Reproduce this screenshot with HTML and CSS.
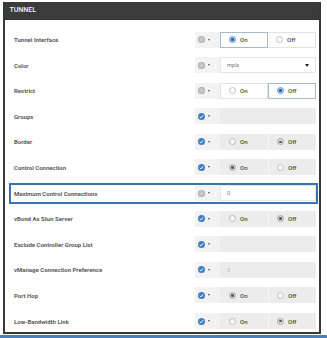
FILE: index.html
```html
<!DOCTYPE html>
<html>
<head>
<meta charset="utf-8">
<link rel="stylesheet" href="styles.css">
</head>
<body>
<div class="panel">
  <div class="header">TUNNEL</div>
  <div class="rows">
    <div class="row">
      <div class="label">Tunnel Interface</div>
      <div class="ctrl">
        <div class="scope"><span class="ico gray"></span><span class="caret"></span></div>
        <div class="opt sel-blue"><span class="radio on-blue"></span>On</div>
        <div class="opt"><span class="radio"></span>Off</div>
      </div>
    </div>
    <div class="row">
      <div class="label">Color</div>
      <div class="ctrl">
        <div class="scope"><span class="ico gray"></span><span class="caret"></span></div>
        <div class="select"><span class="val">mpls</span><span class="tri"></span></div>
      </div>
    </div>
    <div class="row">
      <div class="label">Restrict</div>
      <div class="ctrl">
        <div class="scope"><span class="ico gray"></span><span class="caret"></span></div>
        <div class="opt"><span class="radio"></span>On</div>
        <div class="opt sel-blue"><span class="radio on-blue"></span>Off</div>
      </div>
    </div>
    <div class="row">
      <div class="label">Groups</div>
      <div class="ctrl dis">
        <div class="scope"><span class="ico blue"><svg viewBox="0 0 8 8"><path d="M2 4.2 L3.4 5.5 L6 2.6" fill="none" stroke="#fff" stroke-width="1.1"/></svg></span><span class="caret"></span></div>
        <div class="input"></div>
      </div>
    </div>
    <div class="row">
      <div class="label">Border</div>
      <div class="ctrl dis">
        <div class="scope"><span class="ico blue"><svg viewBox="0 0 8 8"><path d="M2 4.2 L3.4 5.5 L6 2.6" fill="none" stroke="#fff" stroke-width="1.1"/></svg></span><span class="caret"></span></div>
        <div class="opt"><span class="radio"></span>On</div>
        <div class="opt"><span class="radio on-gray"></span>Off</div>
      </div>
    </div>
    <div class="row">
      <div class="label">Control Connection</div>
      <div class="ctrl dis">
        <div class="scope"><span class="ico blue"><svg viewBox="0 0 8 8"><path d="M2 4.2 L3.4 5.5 L6 2.6" fill="none" stroke="#fff" stroke-width="1.1"/></svg></span><span class="caret"></span></div>
        <div class="opt"><span class="radio on-gray"></span>On</div>
        <div class="opt"><span class="radio"></span>Off</div>
      </div>
    </div>
    <div class="row hl">
      <div class="label">Maximum Control Connections</div>
      <div class="ctrl">
        <div class="scope"><span class="ico gray"></span><span class="caret"></span></div>
        <div class="input"><span class="val">0</span></div>
      </div>
    </div>
    <div class="row">
      <div class="label">vBond As Stun Server</div>
      <div class="ctrl dis">
        <div class="scope"><span class="ico blue"><svg viewBox="0 0 8 8"><path d="M2 4.2 L3.4 5.5 L6 2.6" fill="none" stroke="#fff" stroke-width="1.1"/></svg></span><span class="caret"></span></div>
        <div class="opt"><span class="radio"></span>On</div>
        <div class="opt"><span class="radio on-gray"></span>Off</div>
      </div>
    </div>
    <div class="row">
      <div class="label">Exclude Controller Group List</div>
      <div class="ctrl dis">
        <div class="scope"><span class="ico blue"><svg viewBox="0 0 8 8"><path d="M2 4.2 L3.4 5.5 L6 2.6" fill="none" stroke="#fff" stroke-width="1.1"/></svg></span><span class="caret"></span></div>
        <div class="input"></div>
      </div>
    </div>
    <div class="row">
      <div class="label">vManage Connection Preference</div>
      <div class="ctrl dis">
        <div class="scope"><span class="ico blue"><svg viewBox="0 0 8 8"><path d="M2 4.2 L3.4 5.5 L6 2.6" fill="none" stroke="#fff" stroke-width="1.1"/></svg></span><span class="caret"></span></div>
        <div class="input"><span class="val ph">5</span></div>
      </div>
    </div>
    <div class="row">
      <div class="label">Port Hop</div>
      <div class="ctrl dis">
        <div class="scope"><span class="ico blue"><svg viewBox="0 0 8 8"><path d="M2 4.2 L3.4 5.5 L6 2.6" fill="none" stroke="#fff" stroke-width="1.1"/></svg></span><span class="caret"></span></div>
        <div class="opt"><span class="radio on-gray"></span>On</div>
        <div class="opt"><span class="radio"></span>Off</div>
      </div>
    </div>
    <div class="row">
      <div class="label">Low-Bandwidth Link</div>
      <div class="ctrl dis">
        <div class="scope"><span class="ico blue"><svg viewBox="0 0 8 8"><path d="M2 4.2 L3.4 5.5 L6 2.6" fill="none" stroke="#fff" stroke-width="1.1"/></svg></span><span class="caret"></span></div>
        <div class="opt"><span class="radio"></span>On</div>
        <div class="opt"><span class="radio on-gray"></span>Off</div>
      </div>
    </div>
  </div>
</div>
<div class="blueline"></div>
</body>
</html>
```
FILE: styles.css
```css
html, body {
  margin: 0;
  padding: 0;
  background: #fff;
}
body {
  font-family: Roboto, "Liberation Sans", sans-serif;
  width: 327px;
  height: 338px;
  overflow: hidden;
}
.panel {
  margin: 2px 0 0 3px;
  width: 318px;
  box-sizing: border-box;
  border-left: 2px solid #383838;
  border-right: 2px solid #383838;
  border-bottom: 2px solid #383838;
  background: #fff;
}
.header {
  height: 18px;
  background: #3b3b3b;
  border-bottom: 1px dotted #262626;
  box-sizing: border-box;
  color: #f4f4f4;
  font-size: 7px;
  font-weight: 500;
  line-height: 17px;
  padding-left: 4.5px;
}
.rows {
  display: flex;
  flex-direction: column;
  gap: 4.6px;
  padding-top: 9px;
}
.row {
  display: flex;
  align-items: center;
  height: 21px;
  box-sizing: border-box;
  margin: 0 1px 0 4px;
  border: 2px solid transparent;
  padding: 0 0 0 3px;
}
.row.hl {
  border-color: #3873b3;
}
.label {
  flex: 1;
  font-size: 6px;
  font-weight: 700;
  color: #5a5a5a;
}
.ctrl {
  display: flex;
  width: 121px;
  height: 16px;
}
.scope {
  width: 25px;
  display: flex;
  align-items: center;
  background: #f3f3f3;
  box-sizing: border-box;
  padding-left: 3px;
  gap: 3px;
}
.ico {
  width: 7px;
  height: 7px;
  border-radius: 50%;
  display: block;
}
.ico svg {
  width: 7px;
  height: 7px;
  display: block;
}
.ico.gray {
  background: #c6c6c6;
  box-shadow: inset 0 0 0 1px #b3b3b3;
}
.ico.blue {
  background: #3f7fc2;
}
.caret {
  width: 0;
  height: 0;
  border-left: 1.8px solid transparent;
  border-right: 1.8px solid transparent;
  border-top: 2.2px solid #555;
}
.opt {
  width: 48px;
  box-sizing: border-box;
  display: flex;
  align-items: center;
  gap: 4px;
  padding-left: 8px;
  font-size: 6px;
  font-weight: 500;
  color: #4a4a4a;
  background: #fff;
  border: 1px solid #e3e3e3;
}
.opt + .opt {
  border-left: none;
}
.opt.sel-blue {
  border: 1px solid #aab8c8;
}
.radio {
  width: 7px;
  height: 7px;
  box-sizing: border-box;
  border-radius: 50%;
  border: 1px solid #bdbdbd;
  background: #fff;
  display: flex;
  align-items: center;
  justify-content: center;
}
.radio.on-blue {
  border-color: #6f9fd2;
  background: #a9c9ec;
}
.radio.on-blue::after {
  content: "";
  width: 2.5px;
  height: 2.5px;
  border-radius: 50%;
  background: #2d5f96;
}
.radio.on-gray {
  border-color: #a8a8a8;
  background: #ddd;
}
.radio.on-gray::after {
  content: "";
  width: 2.5px;
  height: 2.5px;
  border-radius: 50%;
  background: #555;
}
.select, .input {
  flex: 1;
  display: flex;
  align-items: center;
  justify-content: space-between;
  box-sizing: border-box;
  padding: 0 6px 0 6px;
  background: #fff;
  border: 1px solid #e6e6e6;
}
.val {
  font-size: 5.5px;
  color: #777;
}
.val.ph {
  color: #bbb;
}
.tri {
  width: 0;
  height: 0;
  border-left: 2.5px solid transparent;
  border-right: 2.5px solid transparent;
  border-top: 3px solid #222;
}
.ctrl.dis .scope {
  background: #f2f2f2;
}
.ctrl.dis .opt, .ctrl.dis .input {
  background: #ececec;
  border-color: #ececec;
}
.ctrl.dis .opt + .opt {
  border-left: 1px solid #f8f8f8;
}
.ctrl.dis .radio {
  background: #f6f6f6;
}
.ctrl.dis .radio.on-gray {
  background: #ddd;
}
.blueline {
  margin-top: 1.5px;
  height: 3px;
  background: #4b7fb8;
}
```
